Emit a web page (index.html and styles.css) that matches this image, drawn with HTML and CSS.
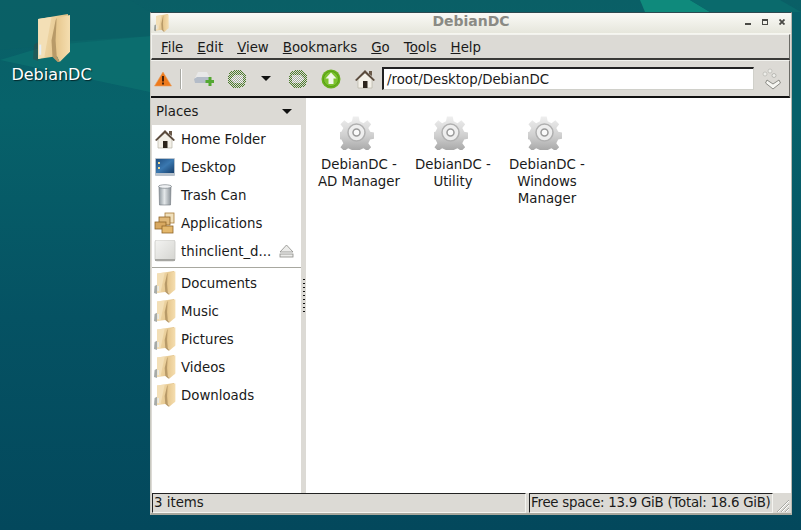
FILE: index.html
```html
<!doctype html>
<html lang="en">
<head>
  <meta charset="utf-8">
  <title>DebianDC</title>
  <link rel="stylesheet" href="styles.css">
</head>
<body>
  <svg width="0" height="0" class="defs">
    <defs>
      <linearGradient id="fold" x1="0" y1="0" x2="1" y2="0.3">
        <stop offset="0" stop-color="#f6e2b8"/><stop offset="1" stop-color="#dfbd80"/>
      </linearGradient>
      <linearGradient id="fold2" x1="0" y1="0" x2="1" y2="0">
        <stop offset="0" stop-color="#e6c68c"/><stop offset="1" stop-color="#f5deb0"/>
      </linearGradient>
      <linearGradient id="gearfill" x1="0" y1="0" x2="0" y2="1">
        <stop offset="0" stop-color="#efefef"/><stop offset=".5" stop-color="#cfcfcf"/><stop offset="1" stop-color="#9c9c9c"/>
      </linearGradient>
      <linearGradient id="metal" x1="0" y1="0" x2="1" y2="0">
        <stop offset="0" stop-color="#8e989e"/><stop offset=".45" stop-color="#e4e8ea"/><stop offset="1" stop-color="#8a9298"/>
      </linearGradient>
      <linearGradient id="driveface" x1="0" y1="0" x2="1" y2="1">
        <stop offset="0" stop-color="#f4f4f2"/><stop offset="1" stop-color="#d4d4d0"/>
      </linearGradient>
      <linearGradient id="screen" x1="0" y1="0" x2="1" y2="1">
        <stop offset="0" stop-color="#1f4f82"/><stop offset=".5" stop-color="#3a78b0"/><stop offset="1" stop-color="#173f6c"/>
      </linearGradient>
      <pattern id="dither" width="2" height="2" patternUnits="userSpaceOnUse">
        <rect width="2" height="2" fill="#dcdcd6"/>
        <rect width="1" height="1" fill="#4c7a2c"/>
        <rect x="1" y="1" width="1" height="1" fill="#4c7a2c"/>
      </pattern>
      <pattern id="ditherin" width="2" height="2" patternUnits="userSpaceOnUse">
        <rect width="2" height="2" fill="#f4f4f2"/>
        <rect width="1" height="1" fill="#a0a89a"/>
        <rect x="1" y="1" width="1" height="1" fill="#a0a89a"/>
      </pattern>
      <symbol id="folder" viewBox="0 0 37 48" preserveAspectRatio="none">
        <path d="M5 46 L0 44 L1 30 L6 27 Z" fill="#3c4440" opacity=".45"/>
        <path d="M5 5 L34 0 L35 38 L26 41 L5 44 Z" fill="url(#fold)"/>
        <path d="M5 5 L18 3 L11 42 L5 44 Z" fill="#f3dfb6"/>
        <path d="M23 4 L36 1 L36 37 L26 47 L23 41 L22 26 Z" fill="url(#fold2)"/>
        <path d="M22 6 L23 4 L22 26 L23 41 L26 47 L24 47 L19 42 L18 26 Z" fill="#b89a68"/>
        <rect x="6" y="30" width="2" height="10" fill="#e6eef6"/>
      </symbol>
      <symbol id="gear" viewBox="0 0 34 34">
        <path d="M14 1h6l1 5 4 2 4-3 4 4-3 4 2 4 5 1v6l-5 1-2 4 3 4-4 4-4-3-4 2-1 5h-6l-1-5-4-2-4 3-4-4 3-4-2-4-5-1v-6l5-1 2-4-3-4 4-4 4 3 4-2z" fill="url(#gearfill)" transform="translate(-0.5,-0.5) scale(.96)"/>
        <circle cx="16.500" cy="16.500" r="8.500" fill="#eeeeee" stroke="#b0b0b0" stroke-width="1.500"/>
        <circle cx="16.500" cy="16.500" r="3.500" fill="#fafafa" stroke="#9a9a9a" stroke-width="1.500"/>
      </symbol>
      <symbol id="home" viewBox="0 0 22 22">
        <path d="M15 3h3v5l-3-2z" fill="#6a5a4a"/>
        <path d="M4 11 L11 5 L18 11 V20 H4 Z" fill="#f3f0e8" stroke="#b8b4a8" stroke-width=".7"/>
        <path d="M1 12 L11 2 L21 12 L19.500 13 L11 5 L2.500 13 Z" fill="#5a4a3c"/>
        <rect x="9" y="13" width="4.500" height="7" fill="#2c241c"/>
      </symbol>
      <symbol id="nav-back" viewBox="0 0 20 20">
        <circle cx="10" cy="10" r="9.500" fill="url(#dither)" shape-rendering="crispEdges"/>
        <path d="M3 10 L8 6 H16 V14 H8 Z" fill="url(#ditherin)" shape-rendering="crispEdges"/>
      </symbol>
      <symbol id="nav-fwd" viewBox="0 0 20 20">
        <circle cx="10" cy="10" r="9.500" fill="url(#dither)" shape-rendering="crispEdges"/>
        <path d="M17 10 L12 6 H4 V14 H12 Z" fill="url(#ditherin)" shape-rendering="crispEdges"/>
      </symbol>
    </defs>
  </svg>

  <svg class="wallpaper" viewBox="0 0 801 530" preserveAspectRatio="none">
    <defs>
      <linearGradient id="wallbg" x1="0" y1="0" x2="0" y2="1">
        <stop offset="0" stop-color="#0a5f66"/><stop offset=".2" stop-color="#07626a"/>
        <stop offset=".6" stop-color="#055263"/><stop offset="1" stop-color="#03485c"/>
      </linearGradient>
    </defs>
    <rect width="801" height="530" fill="url(#wallbg)"/>
    <path d="M0 60 L150 92 L150 36 L60 42 Z" fill="#0c7270" opacity=".75"/>
    <path d="M0 0 H130 L150 12 L150 36 L0 50 Z" fill="#0a6166" opacity=".6"/>
    <path d="M640 0 H690 L710 12 H645 Z" fill="#0f8a7c"/>
    <path d="M690 0 H780 L801 12 H710 Z" fill="#0a6a6c"/>
    <path d="M792 12 H801 V120 H792 Z" fill="#07606a"/>
  </svg>

  <div class="desk-icon">
    <svg class="desk-folder" width="38" height="49"><use href="#folder"/></svg>
    <span class="desk-label">DebianDC</span>
  </div>

  <div class="window">
    <div class="titlebar">
      <svg class="title-icon" width="15" height="18"><use href="#folder"/></svg>
      <span class="title-text">DebianDC</span>
      <div class="title-btns">
        <span class="btn-min"></span>
        <span class="btn-max"></span>
        <svg width="6" height="6" viewBox="0 0 6 6"><path d="M.5 .5l5 5M5.500 .5l-5 5" stroke="#4a4a46" stroke-width="1.800"/></svg>
      </div>
    </div>

    <div class="menubar">
      <span><u>F</u>ile</span>
      <span><u>E</u>dit</span>
      <span><u>V</u>iew</span>
      <span><u>B</u>ookmarks</span>
      <span><u>G</u>o</span>
      <span>T<u>o</u>ols</span>
      <span><u>H</u>elp</span>
    </div>

    <div class="toolbar">
      <svg class="tool-warn" width="18" height="16" viewBox="0 0 18 16">
        <path d="M9 1 L17.500 15 H.5 Z" fill="#ee7a1c" stroke="#e9a060" stroke-width=".6"/>
        <rect x="8" y="5" width="2" height="5.500" fill="#4a2208"/><rect x="8" y="11.500" width="2" height="2" fill="#4a2208"/>
      </svg>
      <span class="tool-sep"></span>
      <svg class="tool-new" width="20" height="16" viewBox="0 0 20 16">
        <path d="M4 1 H13 L16 7 H1 Z" fill="#e8e8e8"/>
        <path d="M0 8 L3 6 H15 L14 12 H1 Z" fill="#b4bcc8"/>
        <path d="M11.500 9h3v-3h3v3h2.500v3h-2.500v3h-3v-3h-3z" fill="#54a832"/>
      </svg>
      <svg class="tool-back" width="20" height="20"><use href="#nav-back"/></svg>
      <span class="tool-arrow"></span>
      <svg class="tool-fwd" width="20" height="20"><use href="#nav-fwd"/></svg>
      <svg class="tool-up" width="20" height="20" viewBox="0 0 20 20">
        <circle cx="10" cy="10" r="9.500" fill="#6ab01e"/>
        <circle cx="10" cy="10" r="7.500" fill="#7cc22e" stroke="#4f9a12" stroke-width=".8"/>
        <path d="M10 3.500 L15.500 9.500 H12.500 V15 H7.500 V9.500 H4.500 Z" fill="#f0f6e8"/>
      </svg>
      <svg class="tool-home" width="22" height="22"><use href="#home"/></svg>
      <div class="location">/root/Desktop/DebianDC</div>
      <svg class="tool-throbber" width="20" height="22" viewBox="0 0 20 22">
        <circle cx="3" cy="6" r="2" fill="#eeeeea" stroke="#b8b8b2" stroke-width=".7"/>
        <circle cx="8" cy="3" r="2" fill="#eeeeea" stroke="#b8b8b2" stroke-width=".7"/>
        <circle cx="12" cy="7.500" r="2" fill="#eeeeea" stroke="#a8a8a2" stroke-width=".7"/>
        <path d="M5 12 L11 16 L17 12 L18.500 15 L11 21 L3.500 15 Z" fill="#f6f6f2" stroke="#8c8c86" stroke-width="1"/>
      </svg>
    </div>

    <div class="panes">
      <aside class="sidebar">
        <div class="side-head"><span>Places</span><i class="head-arrow"></i></div>
        <ul class="places">
          <li>
            <svg width="22" height="22"><use href="#home"/></svg>Home Folder
          </li>
          <li>
            <svg width="22" height="22" viewBox="0 0 22 22">
              <rect x="1" y="2" width="20" height="18" rx="1" fill="#b8c2cc"/>
              <rect x="2" y="3" width="18" height="14" fill="url(#screen)"/>
              <rect x="4" y="6" width="2" height="2" fill="#f0d890"/><rect x="4" y="11" width="2" height="2" fill="#f0d890"/>
            </svg>Desktop
          </li>
          <li>
            <svg width="22" height="22" viewBox="0 0 22 22">
              <path d="M5 2 H17 L16.500 21 H5.500 Z" fill="url(#metal)" stroke="#6e767c" stroke-width=".6"/>
              <ellipse cx="11" cy="2.500" rx="6.500" ry="1.800" fill="#f0f2f4" stroke="#6e767c" stroke-width=".6"/>
            </svg>Trash Can
          </li>
          <li>
            <svg width="22" height="22" viewBox="0 0 22 22">
              <rect x="11" y="1" width="9" height="10" fill="#f0e0bc" stroke="#a87c38" stroke-width=".8"/>
              <rect x="5" y="5" width="11" height="8" fill="#e0b878" stroke="#8e6428" stroke-width=".8"/>
              <rect x="1" y="10" width="11" height="7" fill="#d8a860" stroke="#8e6428" stroke-width=".8"/>
              <rect x="8" y="14" width="11" height="7" fill="#e4b86c" stroke="#8e6428" stroke-width=".8"/>
            </svg>Applications
          </li>
          <li class="drive">
            <svg width="22" height="22" viewBox="0 0 22 22">
              <rect x="1" y="0" width="20" height="21" rx="2" fill="url(#driveface)" stroke="#c8c8c4" stroke-width=".8"/>
              <rect x="1" y="19" width="20" height="2" fill="#a6a6a2"/>
            </svg><span class="drive-name">thinclient_d...</span>
            <svg class="eject" width="15" height="14" viewBox="0 0 15 14">
              <path d="M7.500 1 L14 8 H1 Z" fill="#ececea" stroke="#8a8a86" stroke-width=".8"/>
              <rect x="1" y="10" width="13" height="3" fill="#ececea" stroke="#8a8a86" stroke-width=".8"/>
            </svg>
          </li>
        </ul>
        <hr class="side-sep">
        <ul class="places">
          <li><svg width="22" height="24"><use href="#folder"/></svg>Documents</li>
          <li><svg width="22" height="24"><use href="#folder"/></svg>Music</li>
          <li><svg width="22" height="24"><use href="#folder"/></svg>Pictures</li>
          <li><svg width="22" height="24"><use href="#folder"/></svg>Videos</li>
          <li><svg width="22" height="24"><use href="#folder"/></svg>Downloads</li>
        </ul>
      </aside>
      <div class="handle"><span class="grip"></span></div>
      <main class="files">
        <div class="file"><svg width="34" height="34"><use href="#gear"/></svg><span>DebianDC - AD Manager</span></div>
        <div class="file"><svg width="34" height="34"><use href="#gear"/></svg><span>DebianDC - Utility</span></div>
        <div class="file"><svg width="34" height="34"><use href="#gear"/></svg><span>DebianDC - Windows Manager</span></div>
      </main>
    </div>

    <div class="statusbar">
      <div class="status-left">3 items</div>
      <div class="status-right">Free space: 13.9 GiB (Total: 18.6 GiB)</div>
      <svg class="resize" width="16" height="16" viewBox="0 0 16 16">
        <path d="M15 3 L3 15 M15 7 L7 15 M15 11 L11 15" stroke="#a8a8a2" stroke-width="1"/>
        <path d="M15 4 L4 15 M15 8 L8 15 M15 12 L12 15" stroke="#fff" stroke-width="1"/>
      </svg>
    </div>
  </div>
</body>
</html>
```

FILE: styles.css
```css
html, body{
  margin: 0;
  padding: 0;
  width: 801px;
  height: 530px;
  overflow: hidden;
}
body{
  position: relative;
  font-family: "DejaVu Sans", sans-serif;
  font-size: 13.33px;
  color: #1a1a1a;
  background: #055063;
}
ul{
  list-style: none;
  margin: 0;
  padding: 0;
}
.defs{
  position: absolute;
}
.wallpaper{
  position: absolute;
  left: 0;
  top: 0;
  width: 801px;
  height: 530px;
}

/* desktop */
.desk-icon{
  position: absolute;
  left: 0;
  top: 14px;
  width: 103px;
  display: flex;
  flex-direction: column;
  align-items: center;
  color: white;
  font-size: 16px;
}
.desk-label{
  margin-top: 2px;
  text-shadow: 1px 1px 1px rgba(0,0,0,0.6);
}

/* window */
.window{
  position: absolute;
  left: 150px;
  top: 12px;
  width: 642px;
  height: 503px;
  box-sizing: border-box;
  display: flex;
  flex-direction: column;
  background: #dcdad5;
  border-top: 1px solid #2e4a50;
  border-left: 1px solid #c8c8c0;
  border-right: 1px solid #b8b8b0;
  border-bottom: 2px solid #a8a89e;
}
.titlebar{
  height: 20px;
  flex: none;
  display: flex;
  align-items: center;
  position: relative;
  background: linear-gradient(#fafaf6, #e6e6dc);
  border-bottom: 1px solid #f6f6f0;
}
.title-icon{
  margin-left: 3px;
}
.title-text{
  position: absolute;
  left: 0;
  right: 0;
  top: 0;
  line-height: 17px;
  text-align: center;
  font-weight: bold;
  font-size: 14px;
  color: #8a8a84;
}
.title-btns{
  position: absolute;
  right: 6px;
  top: 6px;
  display: flex;
  align-items: flex-start;
  gap: 11px;
}
.btn-min{
  width: 6px;
  height: 2px;
  margin-top: 4px;
  background: #4a4a46;
}
.btn-max{
  width: 4px;
  height: 3px;
  border: 1px solid #4a4a46;
  border-top-width: 2px;
}
.menubar{
  height: 22px;
  flex: none;
  display: flex;
  align-items: center;
  gap: 14px;
  padding-top: 1px;
  padding-left: 9px;
  margin-right: 1px;
  border-top: 1px solid #f2f2ee;
  border-bottom: 2px solid #3a3a38;
  border-right: 1px solid #6a6a66;
  border-left: 1px solid #f2f2ee;
}
.toolbar{
  height: 35px;
  flex: none;
  display: flex;
  align-items: center;
  margin-right: 1px;
  border-top: 1px solid #f2f2ee;
  border-bottom: 2px solid #111;
  border-right: 1px solid #6a6a66;
}
.tool-warn{
  margin-left: 3px;
}
.tool-sep{
  width: 1px;
  height: 20px;
  margin-left: 8px;
  background: #a8a8a2;
  border-right: 1px solid #fff;
}
.tool-new{
  margin-left: 12px;
}
.tool-back{
  margin-left: 13px;
}
.tool-arrow{
  width: 0;
  height: 0;
  margin-left: 14px;
  border-left: 5px solid transparent;
  border-right: 5px solid transparent;
  border-top: 5px solid #111;
}
.tool-fwd{
  margin-left: 17px;
}
.tool-up{
  margin-left: 13px;
}
.tool-home{
  margin-left: 13px;
}
.location{
  flex: none;
  width: 366px;
  height: 20px;
  margin-left: 6px;
  padding-left: 3px;
  line-height: 21px;
  background: white;
  border-top: 2px solid #222;
  border-left: 2px solid #222;
  border-right: 1px solid #d0d0ca;
  border-bottom: 1px solid #d0d0ca;
}
.tool-throbber{
  margin-left: 8px;
}

/* panes */
.panes{
  flex: 1;
  min-height: 0;
  display: flex;
}
.sidebar{
  width: 150px;
  flex: none;
  display: flex;
  flex-direction: column;
  background: white;
  box-sizing: border-box;
  border-left: 1px solid #dcdad5;
}
.side-head{
  height: 27px;
  flex: none;
  display: flex;
  align-items: center;
  justify-content: space-between;
  padding: 0 9px 0 5px;
  margin-left: -1px;
  background: #dcdad5;
}
.head-arrow{
  width: 0;
  height: 0;
  border-left: 5px solid transparent;
  border-right: 5px solid transparent;
  border-top: 5px solid #111;
}
.places li{
  height: 28px;
  display: flex;
  align-items: center;
  gap: 5px;
  padding-left: 2px;
  white-space: nowrap;
}
.places li svg{
  flex: none;
}
.drive-name{
  flex: 1;
}
.eject{
  margin-right: 7px;
}
.side-sep{
  height: 1px;
  border: none;
  margin: 2px 0 1px;
  background: #a8a8a0;
}
.handle{
  width: 5px;
  flex: none;
  display: flex;
  align-items: center;
  justify-content: center;
  background: #dcdad5;
}
.grip{
  width: 2px;
  height: 33px;
  background: repeating-linear-gradient(#111 0, #111 1px, #dcdad5 1px, #dcdad5 4px);
}
.files{
  flex: 1;
  display: flex;
  align-items: flex-start;
  background: white;
  padding-top: 18px;
  padding-left: 6px;
}
.file{
  width: 94px;
  flex: none;
  display: flex;
  flex-direction: column;
  align-items: center;
  text-align: center;
  line-height: 17px;
}
.file svg{
  margin-right: 4px;
}
.file span{
  display: block;
  width: 90px;
  margin-top: 6px;
}

/* status */
.statusbar{
  height: 20px;
  flex: none;
  display: flex;
  position: relative;
  padding-left: 1px;
}
.status-left, .status-right{
  box-sizing: border-box;
  line-height: 17px;
  padding-left: 1px;
  border-top: 1px solid #222;
  border-left: 1px solid #222;
  border-bottom: 1px solid #f4f4f0;
  border-right: 1px solid #f4f4f0;
  overflow: hidden;
  white-space: nowrap;
}
.status-left{
  width: 374px;
}
.status-right{
  width: 244px;
  margin-left: 3px;
  letter-spacing: -0.25px;
}
.resize{
  position: absolute;
  right: 1px;
  bottom: 0;
}
```
